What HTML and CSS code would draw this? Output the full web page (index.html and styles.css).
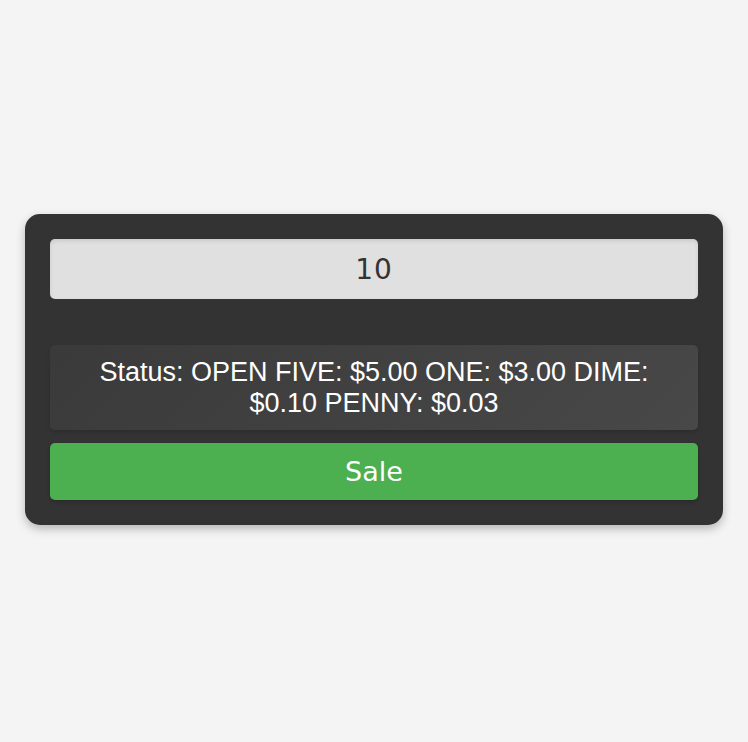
FILE: index.html
```html
<!DOCTYPE html>
<html>
<head>
<meta charset="utf-8">
<link rel="stylesheet" href="styles.css">
</head>
<body>
<div class="page">
  <div class="card">
    <input class="amount" type="text" value="10">
    <div class="status">Status: OPEN FIVE: $5.00 ONE: $3.00 DIME: $0.10 PENNY: $0.03</div>
    <button class="sale">Sale</button>
  </div>
</div>
</body>
</html>
```
FILE: styles.css
```css
html, body {
  margin: 0;
  padding: 0;
  background: #f4f4f4;
}
.page {
  min-height: 742px;
  box-sizing: border-box;
  padding: 0 25px;
  display: flex;
  align-items: center;
}
.card {
  width: 100%;
  box-sizing: border-box;
  margin-top: -3px;
  background: #333333;
  border-radius: 15px;
  padding: 25px;
  box-shadow: 0 4px 10px rgba(0,0,0,0.25);
  display: flex;
  flex-direction: column;
}
.amount {
  display: block;
  box-sizing: border-box;
  width: 100%;
  height: 60px;
  border: none;
  border-radius: 5px;
  background: #e0e0e0;
  color: #333;
  font-family: "DejaVu Sans", sans-serif;
  font-size: 28px;
  text-align: center;
  letter-spacing: 1px;
  padding: 0;
  margin: 0 0 46px;
  outline: none;
  box-shadow: inset 0 2px 4px rgba(0,0,0,0.1);
}
.status {
  background: linear-gradient(135deg, #3a3a3a, #484848);
  border-radius: 5px;
  color: #fff;
  font-family: "Liberation Sans", Arial, sans-serif;
  font-size: 27px;
  line-height: normal;
  text-align: center;
  padding: 11.5px 15px;
  box-shadow: 0 2px 4px rgba(0,0,0,0.15);
  margin-bottom: 13px;
}
.sale {
  display: block;
  width: 100%;
  height: 57px;
  border: none;
  border-radius: 5px;
  background: #4caf50;
  color: #fff;
  font-family: "DejaVu Sans", sans-serif;
  font-size: 27px;
  padding: 0;
  box-shadow: 0 2px 4px rgba(0,0,0,0.2);
}
```
